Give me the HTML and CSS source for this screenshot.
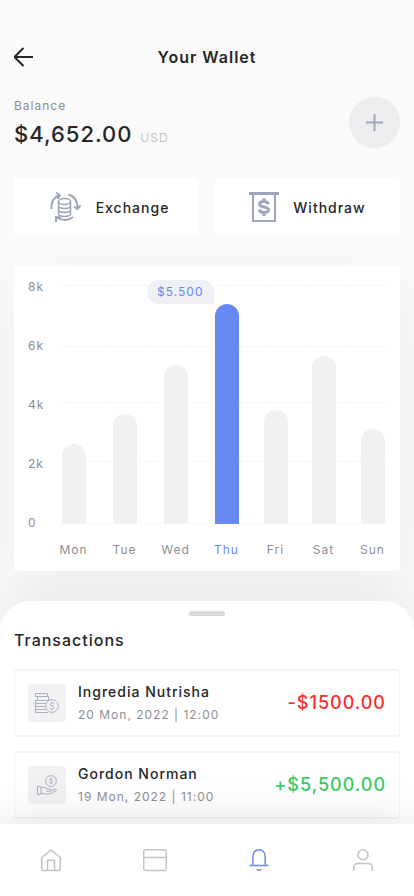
FILE: index.html
```html
<!DOCTYPE html>
<html lang="en">
<head>
<meta charset="utf-8">
<meta name="viewport" content="width=device-width, initial-scale=1">
<title>Your Wallet</title>
<link rel="stylesheet" href="styles.css">
</head>
<body>
<header class="topbar">
  <a class="back" href="#" aria-label="Back">
    <svg width="20" height="20" viewBox="0 0 20 20"><path d="M19 10H1M9.500 1 1 9.500v1L9.500 19"/></svg>
  </a>
  <h1 class="title">Your Wallet</h1>
</header>

<main class="content">
  <section class="balance">
    <div>
      <p class="balance-label">Balance</p>
      <p class="balance-value">$4,652.00 <span class="currency">USD</span></p>
    </div>
    <button class="add" type="button" aria-label="Add money">
      <svg width="17" height="17" viewBox="0 0 17 17"><path d="M8.500 0v17M0 8.500h17"/></svg>
    </button>
  </section>

  <div class="actions">
    <button class="action" type="button">
      <svg class="line-icon" width="38" height="32" viewBox="0 0 38 32">
        <path class="medium" d="M7.500 18C7 11 9.500 6.500 15 4M12 1.500l4 2.500-2.500 4"/>
        <path class="medium" d="M24.500 3.500C31 5.500 33.500 10 33.500 17M30 15.500l3.500 2.500 3-3.500"/>
        <path class="medium" d="M29 26c-4.500 4-11 4-16 .5M12 31v-5l5 .5"/>
        <ellipse cx="20.500" cy="10.500" rx="6" ry="3"/>
        <path d="M14.500 10.500v12c0 4 12 4 12 0v-12M14.500 14.500c0 4 12 4 12 0M14.500 18.500c0 4 12 4 12 0"/>
      </svg>
      Exchange
    </button>
    <button class="action" type="button">
      <svg class="line-icon" width="30" height="31" viewBox="0 0 30 31">
        <path class="thick" d="M0 1.500h30"/>
        <path class="medium" d="M4 2v27h22V2"/>
        <path class="thick" d="M19.300 12.200C19 10.300 17.300 9.500 15 9.500c-2.600 0-4.400 1-4.400 2.700 0 1.900 1.900 2.300 4.400 2.800s4.500 1 4.500 2.800c0 1.800-1.900 2.700-4.500 2.700-2.700 0-4.400-1-4.600-3M15 6v3M15 21v3"/>
      </svg>
      Withdraw
    </button>
  </div>

  <section class="chart" aria-label="Weekly activity">
    <div class="scale"><span>8k</span><span>6k</span><span>4k</span><span>2k</span><span>0</span></div>
    <div class="plot">
      <svg class="grid" width="100%" height="239">
        <line x1="0" y1=".5" x2="100%" y2=".5"/>
        <line x1="0" y1="61.500" x2="100%" y2="61.500"/>
        <line x1="0" y1="117.500" x2="100%" y2="117.500"/>
        <line x1="0" y1="176.500" x2="100%" y2="176.500"/>
        <line x1="0" y1="238.500" x2="100%" y2="238.500"/>
      </svg>
      <div class="days">
        <div class="day"><div class="bar" style="height:80px"></div><span>Mon</span></div>
        <div class="day"><div class="bar" style="height:110px"></div><span>Tue</span></div>
        <div class="day"><div class="bar" style="height:159px"></div><span>Wed</span></div>
        <div class="day active"><div class="bar" style="height:220px"><span class="tip">$5.500</span></div><span>Thu</span></div>
        <div class="day"><div class="bar" style="height:114px"></div><span>Fri</span></div>
        <div class="day"><div class="bar" style="height:168px"></div><span>Sat</span></div>
        <div class="day"><div class="bar" style="height:95px"></div><span>Sun</span></div>
      </div>
    </div>
  </section>
</main>

<section class="sheet">
  <div class="handle"></div>
  <h2 class="sheet-title">Transactions</h2>
  <ul class="list">
    <li class="item">
      <span class="thumb">
        <svg class="fine" width="24" height="20" viewBox="0 0 24 20">
          <path d="M.5.500h12v3H.5zM2.500 3.500h11v4h-11zM14 7.500H.5v12h12.500M.5 10.500h10.500M.5 13.500h10M.5 16.500h10.500"/>
          <circle cx="17" cy="13" r="6.300"/>
          <path d="M19 11.300c-.3-1-1-1.300-2-1.300s-2 .4-2 1.500c0 2 4.200 1 4.200 3 0 1.100-1 1.600-2.200 1.600s-2-.5-2.200-1.600M17 9v1M17 16v1"/>
        </svg>
      </span>
      <div class="who">
        <p class="name">Ingredia Nutrisha</p>
        <p class="date">20 Mon, 2022 | 12:00</p>
      </div>
      <p class="amount out">-$1500.00</p>
    </li>
    <li class="item">
      <span class="thumb">
        <svg class="fine" width="20" height="20" viewBox="0 0 20 20">
          <circle cx="14" cy="6" r="5.400"/>
          <path d="M15.600 4.700c-.2-.8-.8-1-1.600-1s-1.500.3-1.500 1.100c0 1.500 3.100.8 3.100 2.300 0 .8-.7 1.200-1.600 1.200s-1.500-.4-1.600-1.200M14 2.800v.9M14 8.300v.9"/>
          <path d="M.5 11.500h3.500v8H.5zM4 12.500h3c2 0 2.500 1.500 4 1.500h2c2 0 2 2.200 0 2.200H9M14.500 15.500l3.500-1.300c1.300-.4 2 .8 1 1.500L13 19H8l-4-1"/>
        </svg>
      </span>
      <div class="who">
        <p class="name">Gordon Norman</p>
        <p class="date">19 Mon, 2022 | 11:00</p>
      </div>
      <p class="amount in">+$5,500.00</p>
    </li>
  </ul>
</section>

<nav class="tabs" aria-label="Main">
  <a href="#" aria-label="Home"><svg width="24" height="24" viewBox="0 0 24 24"><path d="M2.700 9.500 12 2l9.300 7.500v11c0 1.200-.8 2-2 2H4.700c-1.200 0-2-.8-2-2zM8.500 22.500V12.300h7v10.200"/></svg></a>
  <a href="#" aria-label="Cards"><svg width="24" height="24" viewBox="0 0 24 24"><rect x=".7" y="1.700" width="22.600" height="20.800" rx="2"/><path d="M.7 9.500h22.600"/></svg></a>
  <a class="current" href="#" aria-label="Notifications" aria-current="page"><svg width="24" height="24" viewBox="0 0 24 24"><path d="M2.500 17.500h19M5 17.500c.7-1 .9-2 .9-3.500V8.500c0-4 2.500-6.800 6.100-6.800s6.100 2.800 6.100 6.800V14c0 1.500.2 2.500.9 3.500M9.800 21c.8 1.800 3.600 1.800 4.400 0"/></svg></a>
  <a href="#" aria-label="Profile"><svg width="24" height="24" viewBox="0 0 24 24"><circle cx="12" cy="6.700" r="5"/><path d="M2.700 23v-3.500c0-2.500 1.500-4 4-4h10.600c2.500 0 4 1.500 4 4V23"/></svg></a>
</nav>
</body>
</html>
```
FILE: styles.css
```css
* {
  box-sizing: border-box;
}

body {
  margin: 0;
  min-height: 100vh;
  display: flex;
  flex-direction: column;
  overflow-x: hidden;
  background: #fafafa;
  color: #262626;
  font-family: Inter, "Liberation Sans", sans-serif;
  font-size: 14px;
  letter-spacing: 1px;
}

h1, h2, p, ul {
  margin: 0;
  padding: 0;
}

button {
  border: 0;
  padding: 0;
  color: inherit;
  font: inherit;
  letter-spacing: inherit;
  cursor: pointer;
}

svg {
  display: block;
  fill: none;
  flex: none;
}

.topbar {
  display: grid;
  grid-template-columns: 20px 1fr 20px;
  align-items: center;
  padding: 45px 14px 0;
}

.back {
  stroke: #262626;
  stroke-width: 2;
}

.title {
  font-size: 16px;
  line-height: 24px;
  font-weight: 600;
  text-align: center;
}

.content {
  padding: 28px 14px 30px;
}

.balance {
  display: flex;
  justify-content: space-between;
  align-items: flex-start;
  margin-bottom: 27px;
}

.balance-label {
  font-size: 12px;
  line-height: 18px;
  color: #8e8e93;
}

.balance-value {
  font-size: 22px;
  line-height: 34px;
  margin-top: 2px;
  font-weight: 500;
}

.currency {
  margin-left: 1px;
  font-size: 12px;
  line-height: 12px;
  font-weight: 400;
  color: #c4c4c4;
}

.add {
  width: 51px;
  height: 51px;
  display: grid;
  place-items: center;
  border-radius: 50%;
  background: #ededef;
  stroke: #9ea5bd;
  stroke-width: 2;
}

.actions {
  display: grid;
  grid-template-columns: 1fr 1fr;
  gap: 16px;
}

.action {
  height: 58px;
  display: flex;
  justify-content: center;
  align-items: center;
  gap: 14px;
  border-radius: 4px;
  background: #fff;
  font-weight: 500;
}

.line-icon {
  stroke: #9ea5bd;
  stroke-width: 1.5;
}

.line-icon .medium {
  stroke-width: 2;
}

.line-icon .thick {
  stroke-width: 3;
}

.chart {
  display: flex;
  gap: 13px;
  margin-top: 30px;
  padding: 12px 14px;
  border-radius: 4px;
  background: #fff;
  box-shadow: 0 20px 60px rgba(0, 0, 0, 0.05);
  font-size: 12px;
  line-height: 18px;
  color: #8e8e93;
}

.scale {
  width: 18px;
  display: flex;
  flex-direction: column;
  gap: 41px;
}

.plot {
  position: relative;
  flex: 1;
  padding-top: 7px;
}

.grid {
  position: absolute;
  left: 0;
  top: 7px;
}

.grid line {
  stroke: #f2f2f2;
  stroke-dasharray: 3 2;
}

.days {
  position: relative;
  height: 274px;
  margin: 0 -11px;
  display: grid;
  grid-template-columns: repeat(4, 51fr) 47fr 49fr 49fr;
  align-items: end;
}

.day {
  display: flex;
  flex-direction: column;
  align-items: center;
  gap: 17px;
}

.bar {
  position: relative;
  width: 24px;
  border-radius: 12px 12px 0 0;
  background: #f1f1f1;
}

.active {
  color: #6789f2;
}

.active .bar {
  background: #6789f2;
}

.tip {
  position: absolute;
  right: 100%;
  bottom: 100%;
  margin-right: 1px;
  padding: 0 10px;
  line-height: 24px;
  border-radius: 12px 12px 0 12px;
  background: #eff0f6;
}

.sheet {
  flex: 1;
  padding: 10px 14px 5px;
  border-radius: 30px 30px 0 0;
  background: #fff;
  box-shadow: 0 0 40px rgba(0, 0, 0, 0.08);
}

.handle {
  width: 36px;
  height: 5px;
  margin: 0 auto;
  border-radius: 3px;
  background: #d8d8d8;
}

.sheet-title {
  margin: 12px 0 17px;
  font-size: 16px;
  line-height: 24px;
  font-weight: 500;
}

.list {
  display: grid;
  gap: 14px;
  list-style: none;
}

.item {
  display: flex;
  align-items: center;
  gap: 12px;
  padding: 13px;
  border: solid #f3f3f3;
  border-width: 2px 1px;
  border-radius: 4px;
}

.thumb {
  width: 38px;
  height: 38px;
  display: grid;
  place-items: center;
  border-radius: 4px;
  background: #f2f2f2;
}

.fine {
  stroke: #a9afc6;
  stroke-width: 1;
}

.who {
  flex: 1;
  margin: -4px 0;
}

.name {
  line-height: 23px;
  font-weight: 500;
}

.date {
  font-size: 12px;
  line-height: 23px;
  color: #8e8e93;
}

.amount {
  font-size: 18px;
  line-height: 24px;
  font-weight: 500;
}

.out {
  color: #fb2c2c;
}

.in {
  color: #39cb65;
}

.tabs {
  position: sticky;
  bottom: 0;
  height: 72px;
  display: flex;
  justify-content: space-between;
  align-items: center;
  padding: 0 39px;
  background: #fff;
  box-shadow: 0 0 50px rgba(0, 0, 0, 0.13);
  stroke: #c4c4c4;
  stroke-width: 1.5;
}

.current {
  stroke: #6789f2;
}
```
